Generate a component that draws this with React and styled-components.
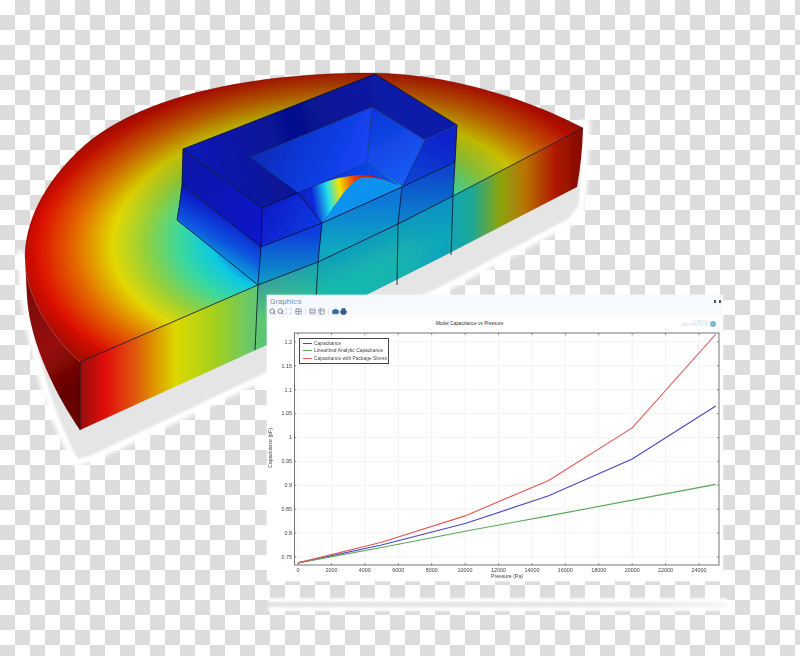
import styled, { createGlobalStyle } from "styled-components";
import { Search, Scan, Grid2x2, Rows3, Table2, Camera, Printer } from "lucide-react";

const GlobalStyle = createGlobalStyle`
  html, body {
    margin: 0;
    padding: 0;
    background: #fff;
    font-family: "Roboto", "Liberation Sans", sans-serif;
  }
`;

const Page = styled.div`
  position: relative;
  width: 800px;
  height: 656px;
  overflow: hidden;
  background: conic-gradient(#dcdcdc 25%, #fff 0 50%, #dcdcdc 0 75%, #fff 0) 0 0 / 30px 30px;
`;

const ModelSvg = styled.svg`
  display: block;
  width: 800px;
  height: 656px;
`;

const Panel = styled.section`
  position: absolute;
  left: 267px;
  top: 295px;
  width: 456px;
  height: 286px;
  display: flex;
  flex-direction: column;
  background: #fff;
  box-shadow: 0 0 2px rgba(255, 255, 255, 0.9);
`;

const PanelShadow = styled.div`
  position: absolute;
  left: 1px;
  right: -4px;
  top: calc(100% + 17px);
  height: 13px;
  display: flex;
  align-items: center;
  background: rgba(255, 255, 255, 0.92);
  filter: blur(1px);
  &::after {
    content: "";
    flex: 1;
    height: 5px;
    background: linear-gradient(90deg, #e2e2e2, #e6e6e6 80%, #f6f6f6);
  }
`;

const TitleBar = styled.header`
  position: relative;
  height: 20px;
  flex: none;
  padding: 2px 0 0 3px;
  box-sizing: border-box;
  background: #f6f9fd;
`;

const Title = styled.div`
  font-size: 8px;
  line-height: 10px;
  color: #7d93bb;
`;

const Toolbar = styled.div`
  display: flex;
  align-items: center;
  height: 8px;
  margin-left: -1.5px;
`;

const ToolIcon = styled.span`
  display: flex;
  flex: none;
  width: 7px;
  height: 7px;
  margin-right: ${(p) => p.$gap}px;
  color: ${(p) => p.$color};
  svg {
    width: 7px;
    height: 7px;
  }
`;

const ToolSep = styled.span`
  flex: none;
  width: 1px;
  height: 7px;
  margin-right: ${(p) => p.$gap}px;
  background: #e2e6ec;
`;

const WindowDots = styled.div`
  position: absolute;
  top: 5px;
  right: 2px;
  display: flex;
  gap: 3px;
  span {
    width: 2px;
    height: 3px;
    background: #555;
  }
`;

const ChartHeader = styled.div`
  position: relative;
  height: 17px;
  flex: none;
  display: flex;
  justify-content: center;
  align-items: center;
  padding-right: 51px;
  box-sizing: border-box;
`;

const ChartTitle = styled.div`
  font-family: "Liberation Sans", sans-serif;
  font-size: 4.8px;
  color: #333;
  white-space: nowrap;
`;

const Logo = styled.div`
  position: absolute;
  right: 7px;
  top: 6px;
  display: flex;
  align-items: center;
  gap: 2px;
  font-family: "Liberation Sans", sans-serif;
  font-size: 3.6px;
  line-height: 3.4px;
  color: #bcd9e5;
  text-align: right;
  i {
    width: 6px;
    height: 6px;
    border-radius: 50%;
    background: #7fb8d4;
  }
`;

const PlotWrap = styled.div`
  position: relative;
  flex: 1;
`;

const PlotSvg = styled.svg`
  display: block;
  width: 456px;
  height: 249px;
  filter: blur(0.25px);
`;

const Legend = styled.div`
  position: absolute;
  left: 32px;
  top: 6px;
  width: 90px;
  height: 26px;
  padding: 1px 0;
  box-sizing: border-box;
  display: flex;
  flex-direction: column;
  justify-content: space-around;
  background: #fff;
  border: 1px solid #444;
  font-family: "Liberation Sans", sans-serif;
  font-size: 4.9px;
  color: #444;
  filter: blur(0.2px);
`;

const LegendRow = styled.div`
  display: flex;
  align-items: center;
  gap: 2px;
  padding-left: 3px;
  white-space: nowrap;
  &::before {
    content: "";
    flex: none;
    width: 9px;
    height: 1px;
    background: ${(p) => p.$color};
  }
`;

// heat map colours, from the middle of the disc out to the rim
const heat = [
  [0, "#0000c8"],
  [0.24, "#0428e0"],
  [0.36, "#0cc8e4"],
  [0.46, "#38d8a0"],
  [0.58, "#98d038"],
  [0.68, "#e2d804"],
  [0.8, "#e46c04"],
  [0.92, "#dc1204"],
  [1, "#a80c04"],
];

const wall = [
  [80, "#980808"],
  [105, "#e00c08"],
  [135, "#e05808"],
  [176, "#dcd800"],
  [215, "#a4d01c"],
  [250, "#68c868"],
  [330, "#14b8ac"],
  [400, "#14b4b0"],
  [445, "#10a4bc"],
  [472, "#1ca898"],
  [500, "#8ca40c"],
  [525, "#b87404"],
  [555, "#b01804"],
  [583, "#800c04"],
];

const linear = [
  ["ringTop", 200, 170, 400, 120, [[0, "#0a1ab4"], [0.5, "#06108c"], [1, "#0a1ca8"]]],
  ["backWall", 260, 120, 370, 170, [[0, "#0a28b0"], [0.45, "#0a38d8"], [1, "#1848f8"]]],
  ["sideWall", 372, 107, 415, 185, [[0, "#0a34d8"], [1, "#1c60f8"]]],
  ["rightSlope", 440, 130, 410, 185, [[0, "#0a20c8"], [1, "#0a44d8"]]],
  ["notchLeft", 265, 205, 320, 235, [[0, "#0a1cc8"], [1, "#0a3ce4"]]],
  ["blockLeft", 190, 160, 255, 235, [[0, "#0818a8"], [1, "#0a18c8"]]],
  ["lowerLeft", 222, 212, 200, 252, [[0, "#0a1cc8"], [0.55, "#0a54e0"], [1, "#0aa0d8"]]],
  ["lowerMid", 290, 232, 290, 280, [[0, "#0a3cdc"], [1, "#0a98c4"]]],
  ["lowerNotch", 360, 200, 360, 250, [[0, "#0a78d8"], [1, "#0ca8c0"]]],
  ["lowerRight", 425, 170, 425, 225, [[0, "#0a44cc"], [1, "#0c88cc"]]],
  ["floorBack", 300, 190, 400, 180, [[0, "#0a28d0"], [1, "#0a50f0"]]],
  ["wave", 300, 196, 402, 180, [[0, "#0a20c0"], [0.12, "#0a28d8"], [0.27, "#20e0f0"], [0.39, "#f0e400"], [0.55, "#e83c04"], [0.75, "#b01008"], [0.92, "#306ca8"], [1, "#0a40a8"]]],
  ["rimShade", 0, 70, 0, 215, [[0, "#000", 0.3], [1, "#000", 0]]],
  ["wallTint", 340, 240, 356, 276, [[0, "#0a78d0", 0.55], [1, "#0a78d0", 0]]],
  ["sideShade", 25, 300, 80, 380, [[0, "#7c0808"], [0.55, "#980a08"], [1, "#660404"]]],
];

const faces = [
  ["ringTop", "183,149 375,74 457,125 425,140 372,107 250,157 298,193 262,208"],
  ["backWall", "250,157 372,107 367,163 298,193"],
  ["sideWall", "372,107 425,140 403,186 367,163"],
  ["rightSlope", "425,140 457,125 455,162 402,187"],
  ["notchLeft", "262,208 298,193 322,223 261,247"],
  ["blockLeft", "183,149 262,208 261,247 182,185"],
  ["lowerLeft", "182,185 261,247 258,285 177,220"],
  ["lowerMid", "261,247 322,223 318,262 258,285"],
  ["lowerNotch", "322,223 402,187 398,224 318,262"],
  ["lowerRight", "402,187 455,162 453,196 398,224"],
  ["floorBack", "298,193 367,163 402,187 322,223"],
];

const edges = [
  "M183,149 L375,74 L457,125 L455,162 L453,196",
  "M183,149 L182,185 Q180,205 177,220 L258,285",
  "M183,149 L262,208 L261,247 L258,285 L255,350",
  "M262,208 L298,193 L322,223 L318,262 L316,300",
  "M182,185 L261,247 L322,223 L402,187 L455,162",
  "M402,187 L398,224 L397,285",
  "M453,196 L451,255",
  "M80,362 L258,285 L318,262 L398,224 L453,196 L583,128",
  "M80,362 L80,430",
];

const thinEdges = [
  "M250,157 L372,107 L425,140 L403,186",
  "M298,193 L367,163 L403,186",
  "M372,107 L367,163",
  "M250,157 L298,193",
];

const DISC = "M583,128 C520,95 440,73 370,73 C270,73 150,90 85,145 C40,185 25,225 25,258 C25,295 50,335 80,362 L258,285 L318,262 L398,224 L453,196 Z";
const PLATE = "M25,262 C26,310 45,400 78,459 L92,455 L267,372 L440,287 L568,219 L579,205 L583,128 L80,300 Z";

const Model = () => (
  <ModelSvg viewBox="0 0 800 656">
    <defs>
      <radialGradient id="disc" gradientUnits="userSpaceOnUse" cx="0" cy="0" r="1" gradientTransform="matrix(251 -117.5 -178 -132 322 232)">
        {heat.map(([o, c]) => <stop key={o} offset={o} stopColor={c} />)}
      </radialGradient>
      <linearGradient id="front" gradientUnits="userSpaceOnUse" x1="80" y1="0" x2="583" y2="0">
        {wall.map(([x, c]) => <stop key={x} offset={(x - 80) / 503} stopColor={c} />)}
      </linearGradient>
      {linear.map(([id, x1, y1, x2, y2, stops]) => (
        <linearGradient key={id} id={id} gradientUnits="userSpaceOnUse" x1={x1} y1={y1} x2={x2} y2={y2}>
          {stops.map(([o, c, a]) => <stop key={o} offset={o} stopColor={c} stopOpacity={a ?? 1} />)}
        </linearGradient>
      ))}
      <filter id="soft" x="-5%" y="-5%" width="110%" height="110%"><feGaussianBlur stdDeviation="0.35" /></filter>
      <filter id="halo" x="-5%" y="-5%" width="110%" height="110%"><feGaussianBlur stdDeviation="2" /></filter>
      <filter id="plateBlur" x="-5%" y="-5%" width="110%" height="110%"><feGaussianBlur stdDeviation="0.8" /></filter>
    </defs>

    <path d={PLATE} fill="#fff" stroke="#fff" strokeWidth="14" filter="url(#halo)" />
    <path d={PLATE} fill="#e5e5e5" filter="url(#plateBlur)" />

    <g filter="url(#soft)">
      <path d="M25,258 C25,295 50,335 80,362 L80,430 C58,398 30,345 27,297 Z" fill="url(#sideShade)" />
      <path d="M80,362 L258,285 L318,262 L398,224 L453,196 L583,128 Q582,160 577,187 L440,258 L267,345 L80,430 Z" fill="url(#front)" />
      <polygon points="258,285 318,262 398,224 453,196 451,240 397,270 318,305 258,330" fill="url(#wallTint)" />
      <path d={DISC} fill="url(#disc)" />
      <path d={DISC} fill="url(#rimShade)" />

      {faces.map(([id, pts]) => <polygon key={id} points={pts} fill={`url(#${id})`} />)}

      {/* the bump on the floor of the notch */}
      <path d="M322,223 L403,186 C390,184 382,176 367,176 C350,176 340,200 322,223 Z" fill="#0f92f0" />
      <path d="M298,193 C320,183 340,175 365,175 C380,175 392,185 403,186 C390,184 382,177 367,177 C350,177 340,200 322,223 Z" fill="url(#wave)" />

      <g fill="none" stroke="#060e28">
        {edges.map((d) => <path key={d} d={d} strokeWidth="0.8" />)}
        {thinEdges.map((d) => <path key={d} d={d} strokeWidth="0.5" strokeOpacity="0.7" />)}
      </g>
      <path d="M25,258 C25,235 40,185 85,145 C150,90 270,73 370,73 C440,73 520,95 583,128" fill="none" stroke="#500800" strokeWidth="0.5" strokeOpacity="0.6" />
    </g>
  </ModelSvg>
);

const xTicks = Array.from({ length: 13 }, (_, i) => i * 2000);
const yTicks = [1.2, 1.15, 1.1, 1.05, 1, 0.95, 0.9, 0.85, 0.8, 0.75];

// plot coordinates are inside PlotSvg, which starts at 267,332 on the page
const px = (p) => 31 + p * 0.01671;
const py = (v) => 225 - (v - 0.75) * 478;

const pressures = [0, 5000, 10000, 15000, 20000, 25000];
const series = [
  ["#4848c0", "Capacitance", [0.7377, 0.775, 0.82, 0.878, 0.955, 1.066]],
  ["#58a858", "Linearized Analytic Capacitance", [0.7377, 0.77, 0.804, 0.836, 0.869, 0.902]],
  ["#e05858", "Capacitance with Package Stress", [0.7377, 0.781, 0.836, 0.91, 1.02, 1.216]],
];

const Plot = () => (
  <PlotSvg viewBox="0 0 456 249" fontFamily="'Liberation Sans', sans-serif" fontSize="5.2" fill="#444">
    {xTicks.map((t) => (
      <g key={t}>
        <line x1={px(t)} x2={px(t)} y1="1" y2="233" stroke="#eee" strokeWidth="0.7" />
        <line x1={px(t)} x2={px(t)} y1="1" y2="3" stroke="#666" strokeWidth="0.7" />
        <line x1={px(t)} x2={px(t)} y1="231" y2="233" stroke="#666" strokeWidth="0.7" />
        <text x={px(t)} y="239.5" textAnchor="middle" fontSize="5.4">{t}</text>
      </g>
    ))}
    {yTicks.map((v) => (
      <g key={v}>
        <line x1="27" x2="452" y1={py(v)} y2={py(v)} stroke="#eee" strokeWidth="0.7" />
        <line x1="27" x2="29" y1={py(v)} y2={py(v)} stroke="#666" strokeWidth="0.7" />
        <line x1="450" x2="452" y1={py(v)} y2={py(v)} stroke="#666" strokeWidth="0.7" />
        <text x="25" y={py(v) + 1.8} textAnchor="end" fontSize="5.4">{v}</text>
      </g>
    ))}
    <rect x="27.5" y="1" width="424.5" height="232" fill="none" stroke="#666" strokeWidth="0.9" />
    {series.map(([color, name, vals]) => (
      <polyline
        key={name}
        points={vals.map((v, i) => `${px(pressures[i])},${py(v)}`).join(" ")}
        fill="none"
        stroke={color}
        strokeWidth="1.1"
      />
    ))}
    <text x="240" y="245.5" textAnchor="middle">Pressure (Pa)</text>
    <text transform="translate(4.5 116) rotate(-90)" textAnchor="middle">Capacitance (pF)</text>
  </PlotSvg>
);

export default function App() {
  return (
    <Page>
      <GlobalStyle />
      <Model />
      <Panel>
        <TitleBar>
          <Title>Graphics</Title>
          <Toolbar>
            <ToolIcon $color="#6b7480" $gap={1}><Search strokeWidth={3} /></ToolIcon>
            <ToolIcon $color="#6b7480" $gap={1}><Search strokeWidth={3} /></ToolIcon>
            <ToolIcon $color="#b8bec6" $gap={3}><Scan strokeWidth={2.5} /></ToolIcon>
            <ToolIcon $color="#7f8894" $gap={3}><Grid2x2 strokeWidth={2.5} /></ToolIcon>
            <ToolSep $gap={3} />
            <ToolIcon $color="#8b95a3" $gap={2}><Rows3 strokeWidth={2.5} /></ToolIcon>
            <ToolIcon $color="#8b95a3" $gap={3}><Table2 strokeWidth={2.5} /></ToolIcon>
            <ToolSep $gap={3.5} />
            <ToolIcon $color="#2f6c9c" $gap={1}><Camera fill="currentColor" /></ToolIcon>
            <ToolIcon $color="#2f5c8c" $gap={0}><Printer fill="currentColor" /></ToolIcon>
          </Toolbar>
          <WindowDots><span /><span /></WindowDots>
        </TitleBar>
        <ChartHeader>
          <ChartTitle>Model Capacitance vs Pressure</ChartTitle>
          <Logo>
            <span>COMSOL<br />MULTIPHYSICS</span>
            <i />
          </Logo>
        </ChartHeader>
        <PlotWrap>
          <Plot />
          <Legend>
            {series.map(([color, name]) => (
              <LegendRow key={name} $color={color}>{name}</LegendRow>
            ))}
          </Legend>
        </PlotWrap>
        <PanelShadow />
      </Panel>
    </Page>
  );
}
